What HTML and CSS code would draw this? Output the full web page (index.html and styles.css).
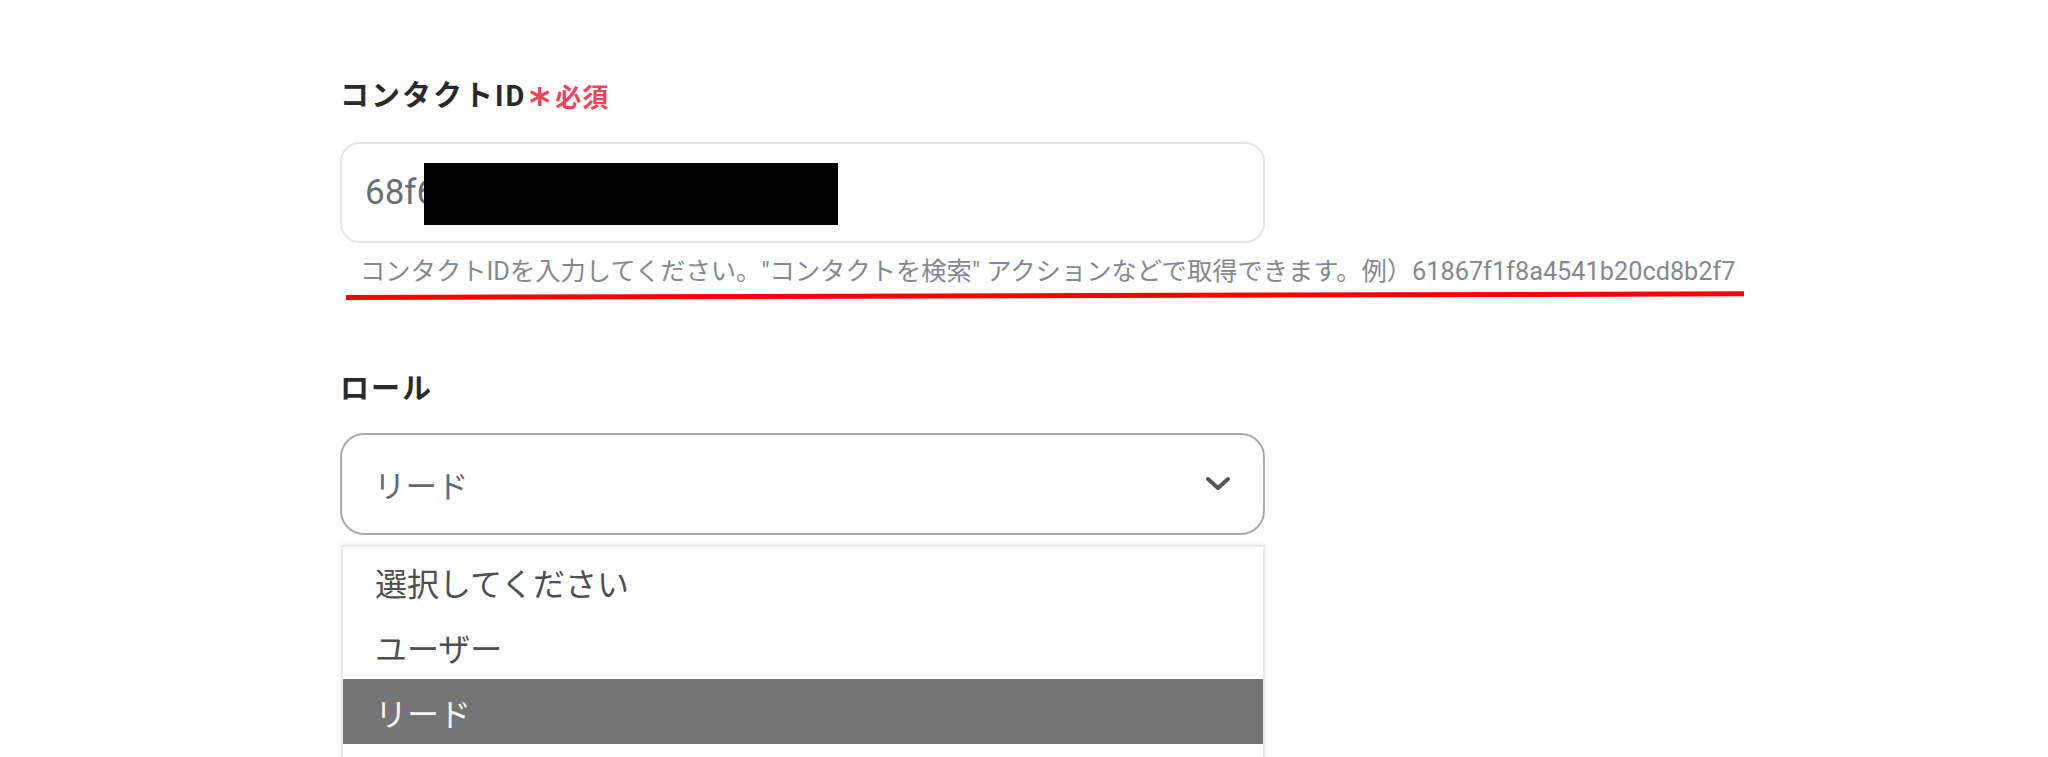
FILE: index.html
```html
<!DOCTYPE html>
<html lang="ja">
<head>
<meta charset="utf-8">
<link rel="stylesheet" href="styles.css">
</head>
<body>
<main class="form">
  <section class="field">
    <div class="label">コンタクトID<span class="req"><span class="star">*</span>必須</span></div>
    <div class="input">
      <span class="value">68f6</span>
      <span class="redact"></span>
    </div>
    <p class="help">コンタクトIDを入力してください。"コンタクトを検索" アクションなどで取得できます。例）61867f1f8a4541b20cd8b2f7</p>
    <div class="underline"></div>
  </section>
  <section class="field role">
    <div class="label">ロール</div>
    <div class="select">
      <span class="sel-value">リード</span>
      <svg class="chev" width="26" height="16" viewBox="0 0 26 16"><path d="M3 3 L13 12 L23 3" fill="none" stroke="#555" stroke-width="4" stroke-linecap="round" stroke-linejoin="round"/></svg>
    </div>
    <ul class="list">
      <li class="opt">選択してください</li>
      <li class="opt">ユーザー</li>
      <li class="opt active">リード</li>
      <li class="opt"></li>
    </ul>
  </section>
</main>
</body>
</html>
```
FILE: styles.css
```css
* { box-sizing: border-box; }
html, body { margin: 0; padding: 0; background: #fff; }
body {
  font-family: "Roboto", "Noto Sans CJK JP", sans-serif;
  overflow: hidden;
  height: 757px;
}
.form {
  padding: 78px 0 0 340px;
  width: 1265px;
}
.label {
  font-family: "Roboto", "Noto Sans CJK JP", sans-serif;
  font-weight: 700;
  font-size: 29px;
  letter-spacing: 2px;
  line-height: 36px;
  color: #2a2a2a;
  display: flex;
  align-items: center;
}
.req {
  color: #f0435b;
  font-family: "Noto Sans CJK JP", sans-serif;
  font-size: 26px;
  font-weight: 700;
  letter-spacing: 1px;
  margin-left: 3px;
  display: flex;
  align-items: center;
}
.star {
  font-family: "DejaVu Sans", sans-serif;
  font-size: 40px;
  margin-right: 4px;
  position: relative;
  top: 7px;
}
.input {
  position: relative;
  margin-top: 28px;
  height: 101px;
  border: 2px solid #e2e4e8;
  border-radius: 20px;
  display: flex;
  align-items: center;
  padding-left: 23px;
  overflow: hidden;
}
.value {
  font-size: 35px;
  color: #6a6e74;
}
.redact {
  position: absolute;
  left: 82px;
  top: 19px;
  width: 414px;
  height: 62px;
  background: #000;
}
.help {
  margin: 13px 0 0 20px;
  font-family: "Roboto", "Noto Sans CJK JP", sans-serif;
  font-size: 25.3px;
  line-height: 32px;
  color: #848990;
  white-space: nowrap;
}
.underline {
  margin: 7px 0 0 6px;
  width: 1398px;
  height: 5px;
  background: #ff0000;
  transform: rotate(-0.15deg);
  transform-origin: left center;
}
.role { margin-top: 71px; }
.select {
  margin-top: 26px;
  height: 102px;
  border: 2px solid #a9a9a9;
  border-radius: 24px;
  display: flex;
  align-items: center;
  justify-content: space-between;
  padding: 0 32px 0 32px;
}
.sel-value {
  font-family: "Noto Sans CJK JP", sans-serif;
  font-size: 31.5px;
  color: #66686c;
}
.list {
  list-style: none;
  margin: 10px 0 0 1px;
  padding: 2px 0 0 0;
  border: 2px solid #e8e8e8;
  border-bottom: none;
  box-shadow: 0 -2px 4px rgba(0,0,0,0.06);
}
.opt {
  height: 64px;
  display: flex;
  align-items: center;
  padding-left: 32px;
  font-family: "Noto Sans CJK JP", sans-serif;
  font-size: 32px;
  color: #4d4f53;
}
.opt:first-child { height: 66px; }
.opt.active {
  background: #757575;
  color: #f4f4f4;
  height: 65px;
}
```
